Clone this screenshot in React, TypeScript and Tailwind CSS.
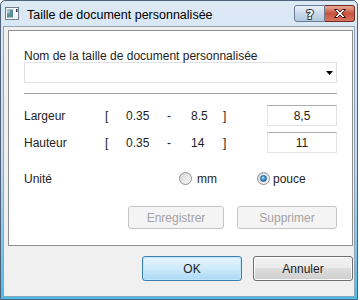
import React from 'react';

const Radio = ({ checked }: { checked?: boolean }) => (
  <div className="flex h-[13px] w-[13px] items-center justify-center rounded-full border border-[#8e8f8f] bg-gradient-to-br from-[#d4d4d4] to-[#fbfbfb]">
    {checked && (
      <div className="h-[7px] w-[7px] rounded-full border border-[#1d5c8f] bg-[radial-gradient(circle_at_40%_35%,#a8e4ff,#2f8ed0_55%,#0f4f86)]" />
    )}
  </div>
);

const TextBox = ({ value }: { value: string }) => (
  <div className="flex h-[21px] w-[70px] items-center justify-center border border-[#e2e3ea] border-t-[#abadb3] bg-white leading-[16px]">
    {value}
  </div>
);

const SizeRow = ({ label, min, max, value }: { label: string; min: string; max: string; value: string }) => (
  <div className="flex h-[21px] items-center leading-[16px]">
    <div className="w-[81px]">{label}</div>
    <div className="w-[21px]">[</div>
    <div className="w-[41px]">{min}</div>
    <div className="w-[24px]">-</div>
    <div className="w-[32px]">{max}</div>
    <div>]</div>
    <div className="flex-1" />
    <TextBox value={value} />
  </div>
);

export default function App() {
  return (
    <div className="h-[300px] w-[360px] bg-white font-['Liberation_Sans',Arial,sans-serif] text-[12px] text-[#1e1e1e]">
      <div className="flex h-[300px] w-[358px] flex-col rounded-t-[5px] border border-[#4f6279] bg-gradient-to-b from-[#dde9f5] via-[#c9dbee] to-[#46bde9]">
        {/* title bar */}
        <div className="flex h-[25px] items-start">
          <svg className="ml-[4px] mt-[6px]" width="14" height="13" viewBox="0 0 14 13">
            <rect x="0.5" y="0.5" width="13" height="12" fill="#f4f6f8" stroke="#6f7f90" />
            <rect x="2" y="2.5" width="6" height="8" fill="#5d8f9a" />
            <rect x="2" y="2.5" width="3" height="4" fill="#9bc0c5" />
            <rect x="11" y="2" width="1.5" height="3" fill="#2f3a45" />
          </svg>
          <div className="ml-[8px] mt-[6px] text-[12.5px] leading-[16px] text-black">Taille de document personnalisée</div>
          <div className="flex-1" />
          <div className="mt-[4px] flex h-[17px] w-[31px] items-center justify-center rounded-l-[3px] border border-[#6b7d94] bg-gradient-to-b from-[#e9f1f9] via-[#c9d9ea] to-[#b3c8df]">
            <svg width="12" height="14" viewBox="0 0 12 14">
              <text x="6" y="12" textAnchor="middle" fontFamily="DejaVu Sans, sans-serif" fontWeight="bold" fontSize="13" fill="#ffffff" stroke="#2a3542" strokeWidth="2" paintOrder="stroke" strokeLinejoin="round">?</text>
            </svg>
          </div>
          <div className="mr-[2px] mt-[4px] flex h-[17px] w-[30px] items-center justify-center rounded-r-[3px] border border-l-0 border-[#6e2b22] bg-gradient-to-b from-[#e9ab9b] via-[#c7533f] to-[#d9745f]">
            <svg width="12" height="9" viewBox="0 0 12 9">
              <path d="M0.5 0.5H3.5L6 3L8.5 0.5H11.5L7.7 4.5L11.5 8.5H8.5L6 6L3.5 8.5H0.5L4.3 4.5Z" fill="#ffffff" stroke="#3a1410" strokeWidth="1" strokeLinejoin="round" />
            </svg>
          </div>
        </div>

        {/* client area */}
        <div className="mx-[2px] mb-[2px] flex-1 border border-[#8fa2b6] bg-[#f0f0f0]">
          <div className="ml-[4px] mt-[3px] h-[216px] w-[345px] border border-[#8e8f8f] bg-white px-[15px] pt-[17px]">
            <div className="h-[14px] leading-[16px]">Nom de la taille de document personnalisée</div>
            <div className="flex h-[21px] items-center justify-end border border-[#e0e1e6] bg-white pr-[3px]">
              <svg width="7" height="4" viewBox="0 0 7 4">
                <path d="M0 0H7L3.5 4Z" fill="#000" />
              </svg>
            </div>
            <div className="mt-[10px] h-px bg-[#a0a0a0]" />
            <div className="mt-[11px]">
              <SizeRow label="Largeur" min="0.35" max="8.5" value="8,5" />
            </div>
            <div className="mt-[6px]">
              <SizeRow label="Hauteur" min="0.35" max="14" value="11" />
            </div>
            <div className="mt-[15px] flex h-[21px] items-center leading-[16px]">
              <div className="w-[155px]">Unité</div>
              <div className="flex w-[78px] items-center gap-[5px]">
                <Radio />
                <span>mm</span>
              </div>
              <div className="flex items-center gap-[3px]">
                <Radio checked />
                <span>pouce</span>
              </div>
            </div>
            <div className="mt-[17px] flex justify-end gap-[13px] text-[#a3a3a3]">
              <div className="flex h-[23px] w-[96px] items-center justify-center rounded-[3px] border border-[#c2c4c6] bg-[#f4f4f4]">Enregistrer</div>
              <div className="flex h-[23px] w-[100px] items-center justify-center rounded-[3px] border border-[#c2c4c6] bg-[#f4f4f4]">Supprimer</div>
            </div>
          </div>

          <div className="ml-[4px] mt-[10px] flex w-[345px] justify-end gap-[11px]">
            <div className="flex h-[25px] w-[100px] items-center justify-center rounded-[3px] border border-[#3c7fb1] bg-gradient-to-b from-[#e6f4fc] via-[#cdeafb] to-[#a9d9f5] shadow-[inset_0_0_0_1px_#bfe5fb]">OK</div>
            <div className="flex h-[25px] w-[100px] items-center justify-center rounded-[3px] border border-[#707070] bg-[linear-gradient(#f2f2f2,#ebebeb_50%,#dddddd_50%,#cfcfcf)] shadow-[inset_0_0_0_1px_#fcfcfc]">Annuler</div>
          </div>
        </div>
      </div>
    </div>
  );
}
